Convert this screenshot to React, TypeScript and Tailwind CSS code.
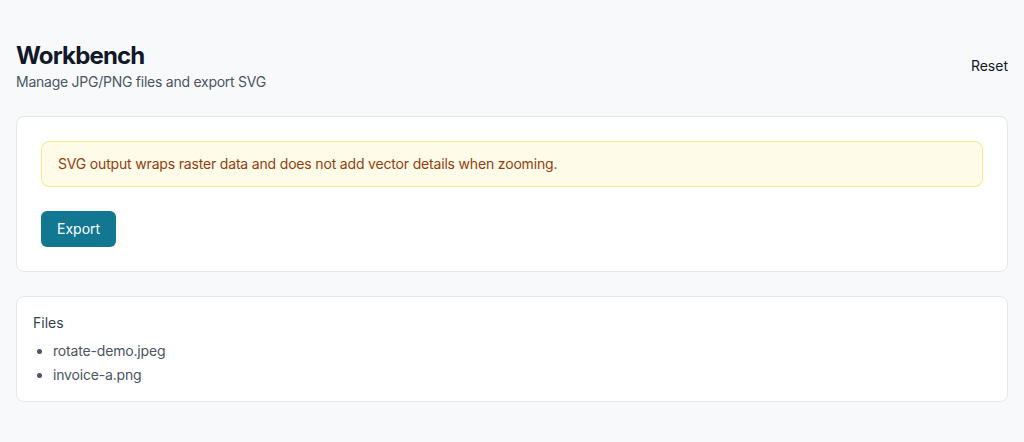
const files = ["rotate-demo.jpeg", "invoice-a.png"];

export default function App() {
  return (
    <div className="min-h-screen bg-[#f8f9fb] px-4 pt-10 pb-10 font-['Inter','Liberation_Sans',sans-serif] text-gray-900">
      {/* Header */}
      <header className="mb-6 flex items-center justify-between">
        <div>
          <h1 className="text-2xl font-bold tracking-[-0.035em] text-[#111827]">Workbench</h1>
          <p className="text-sm tracking-[-0.018em] text-[#4b5563]">Manage JPG/PNG files and export SVG</p>
        </div>
        <button className="text-sm text-[#111827]">Reset</button>
      </header>

      {/* Export card */}
      <section className="rounded-lg border border-[#e5e7eb] bg-white p-6">
        <div className="rounded-lg border border-[#fde68a] bg-[#fefbe8] px-4 py-3 text-sm tracking-[-0.0125em] text-[#92400e]">
          SVG output wraps raster data and does not add vector details when zooming.
        </div>
        <button className="mt-6 rounded-md bg-[#127892] px-4 py-2 text-sm text-white">
          Export
        </button>
      </section>

      {/* Files */}
      <section className="mt-6 rounded-lg border border-[#e5e7eb] bg-white p-4 pb-3.5">
        <h2 className="text-sm text-[#374151]">Files</h2>
        <ul className="mt-1.5 list-disc pl-5 text-sm tracking-[-0.0125em] text-[#4b5563]">
          {files.map((f) => (
            <li key={f} className="leading-6">
              {f}
            </li>
          ))}
        </ul>
      </section>
    </div>
  );
}
